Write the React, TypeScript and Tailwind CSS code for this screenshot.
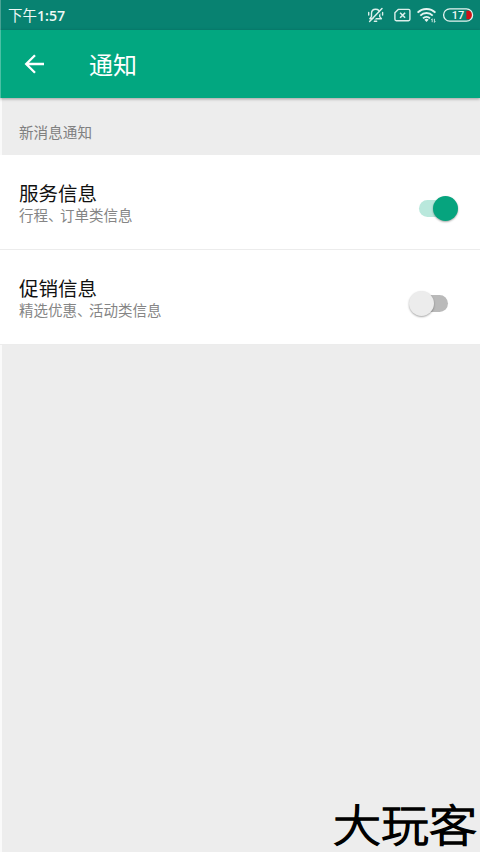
import { useState } from "react";
import clsx from "clsx";

type SettingRowProps = {
  title: string;
  summary: string[];
  defaultOn?: boolean;
};

const StatusIcons = () => (
  <svg width="112" height="20" viewBox="366 5 112 20" fill="none">
    {/* muted bell */}
    <g stroke="#dcefeb" strokeWidth="1.4" strokeLinecap="round" strokeLinejoin="round">
      <path d="M369.8 18.8h11.6l-1.7-2.2v-3.2c0-2.4-1.6-4.2-4.1-4.2s-4.1 1.8-4.1 4.2v3.2l-1.7 2.2z" />
      <path d="M374.3 21.2h2.4M368.7 12.4v2.6M382.6 12.4v2.6" />
    </g>
    <path d="M371 22.2 383 9.4" stroke="#0a8371" strokeWidth="1.6" />
    <path d="M369.6 21.4 382 8.6" stroke="#dcefeb" strokeWidth="1.5" strokeLinecap="round" />
    {/* missing sim */}
    <path
      d="M398.2 9.4h10.3c.8 0 1.4.6 1.4 1.4v8.5c0 .8-.6 1.4-1.4 1.4h-12.2c-.8 0-1.4-.6-1.4-1.4v-6.6z"
      stroke="#dcefeb"
      strokeWidth="1.4"
      strokeLinejoin="round"
    />
    <path d="m400.1 12.7 5 5m0-5-5 5" stroke="#dcefeb" strokeWidth="1.6" />
    {/* wifi */}
    <g stroke="#e6f4f1" strokeWidth="1.9">
      <path d="M417.6 12.7a12.6 12.6 0 0 1 17.8 0" />
      <path d="M420.3 15.6a8.8 8.8 0 0 1 12.4 0" />
      <path d="M423 18.4a5 5 0 0 1 7 0" />
    </g>
    <path d="M424.4 19.8a3 3 0 0 1 4.2 0l-2.1 2.2z" fill="#e6f4f1" />
    <path d="M432.2 22.2v-3.4m-1 1 1-1M434.4 18.8v3.6m1-1-1 1" stroke="#dcefeb" strokeWidth=".9" />
    {/* battery */}
    <path d="M466.4 10.8h3.4a4.6 4.6 0 0 1 0 8.4h-3.4z" fill="#d01216" />
    <rect x="443.6" y="8.8" width="29" height="12.4" rx="6.2" stroke="#e6f4f1" strokeWidth="1.3" />
    <text
      x="458"
      y="19"
      textAnchor="middle"
      fill="#f2faf8"
      className="font-['Roboto',sans-serif] text-[11px] font-medium"
    >
      17
    </text>
  </svg>
);

const Toggle = ({ on, onChange }: { on: boolean; onChange: () => void }) => (
  <button
    role="switch"
    aria-checked={on}
    onClick={onChange}
    className="relative h-[26px] w-[50px]"
  >
    <span
      className={clsx(
        "absolute top-[5px] h-[17px] w-[35px] rounded-full",
        on ? "left-[10px] bg-[#b9e8dc]" : "left-[4px] bg-[#bababa]"
      )}
    />
    <span
      className={clsx(
        "absolute top-[1px] size-[25px] rounded-full shadow-[0_1px_2px_rgba(0,0,0,0.35)]",
        on ? "left-[24px] bg-[#06a47e]" : "left-0 bg-[#ececec]"
      )}
    />
  </button>
);

const SettingRow = ({ title, summary, defaultOn = false }: SettingRowProps) => {
  const [on, setOn] = useState(defaultOn);
  return (
    <div className="flex h-[95px] items-start justify-between border-b border-[#ececec] bg-white pr-[21px] pl-[19px]">
      <div className="pt-[26px]">
        <p className="text-[19.5px] leading-[24px] text-[#111]">{title}</p>
        <p className="text-[14.5px] leading-[20px] text-[#858585]">
          {summary[0]}
          {/* the enumeration comma is set tighter than a full em */}
          <span className="tracking-[-2.4px]">、</span>
          {summary[1]}
        </p>
      </div>
      <div className="flex pt-[40px]">
        <Toggle on={on} onChange={() => setOn(!on)} />
      </div>
    </div>
  );
};

const App = () => {
  return (
    <div className="relative flex h-[853px] w-[480px] flex-col overflow-hidden border-b border-white bg-[#ededed] font-['Noto_Sans_CJK_SC',sans-serif]">
      <div className="flex h-[30px] shrink-0 items-center justify-between border-l border-[#4aa294] bg-[#088271] pr-[2px] pl-[7px]">
        <span className="text-[14.5px] text-[#eef8f6]">
          下午
          <span className="font-['Open_Sans',sans-serif] text-[14.2px] font-semibold">1:57</span>
        </span>
        <StatusIcons />
      </div>
      <header className="z-10 flex h-[68px] shrink-0 items-center border-l border-[#4ac0a4] bg-[#02a780] pl-[23px] shadow-[0_1px_3px_rgba(0,0,0,0.35)]">
        <svg width="22" height="22" viewBox="0 0 22 22" fill="none" stroke="#fff" strokeWidth="2.3">
          <path d="M20 11H2.5M11 2.2 2.2 11l8.8 8.8" />
        </svg>
        <h1 className="ml-[43px] text-[24px] leading-[32px] text-white">通知</h1>
      </header>
      <main className="flex grow flex-col">
        <p className="h-[57px] border-l-2 border-[#fafafa] pt-[23px] pl-[17px] text-[14.6px] leading-[21px] text-[#808080]">
          新消息通知
        </p>
        <SettingRow title="服务信息" summary={["行程", "订单类信息"]} defaultOn />
        <SettingRow title="促销信息" summary={["精选优惠", "活动类信息"]} />
        <div className="grow border-l-2 border-[#fafafa]" />
      </main>
      <div className="absolute right-[3px] bottom-[7px] origin-bottom scale-y-[0.92] text-[48px] leading-[48px] font-light text-black [-webkit-text-stroke:1.6px_#000] [text-shadow:0_0_2px_#fff8dc]">
        大玩客
      </div>
    </div>
  );
};

export default App;
